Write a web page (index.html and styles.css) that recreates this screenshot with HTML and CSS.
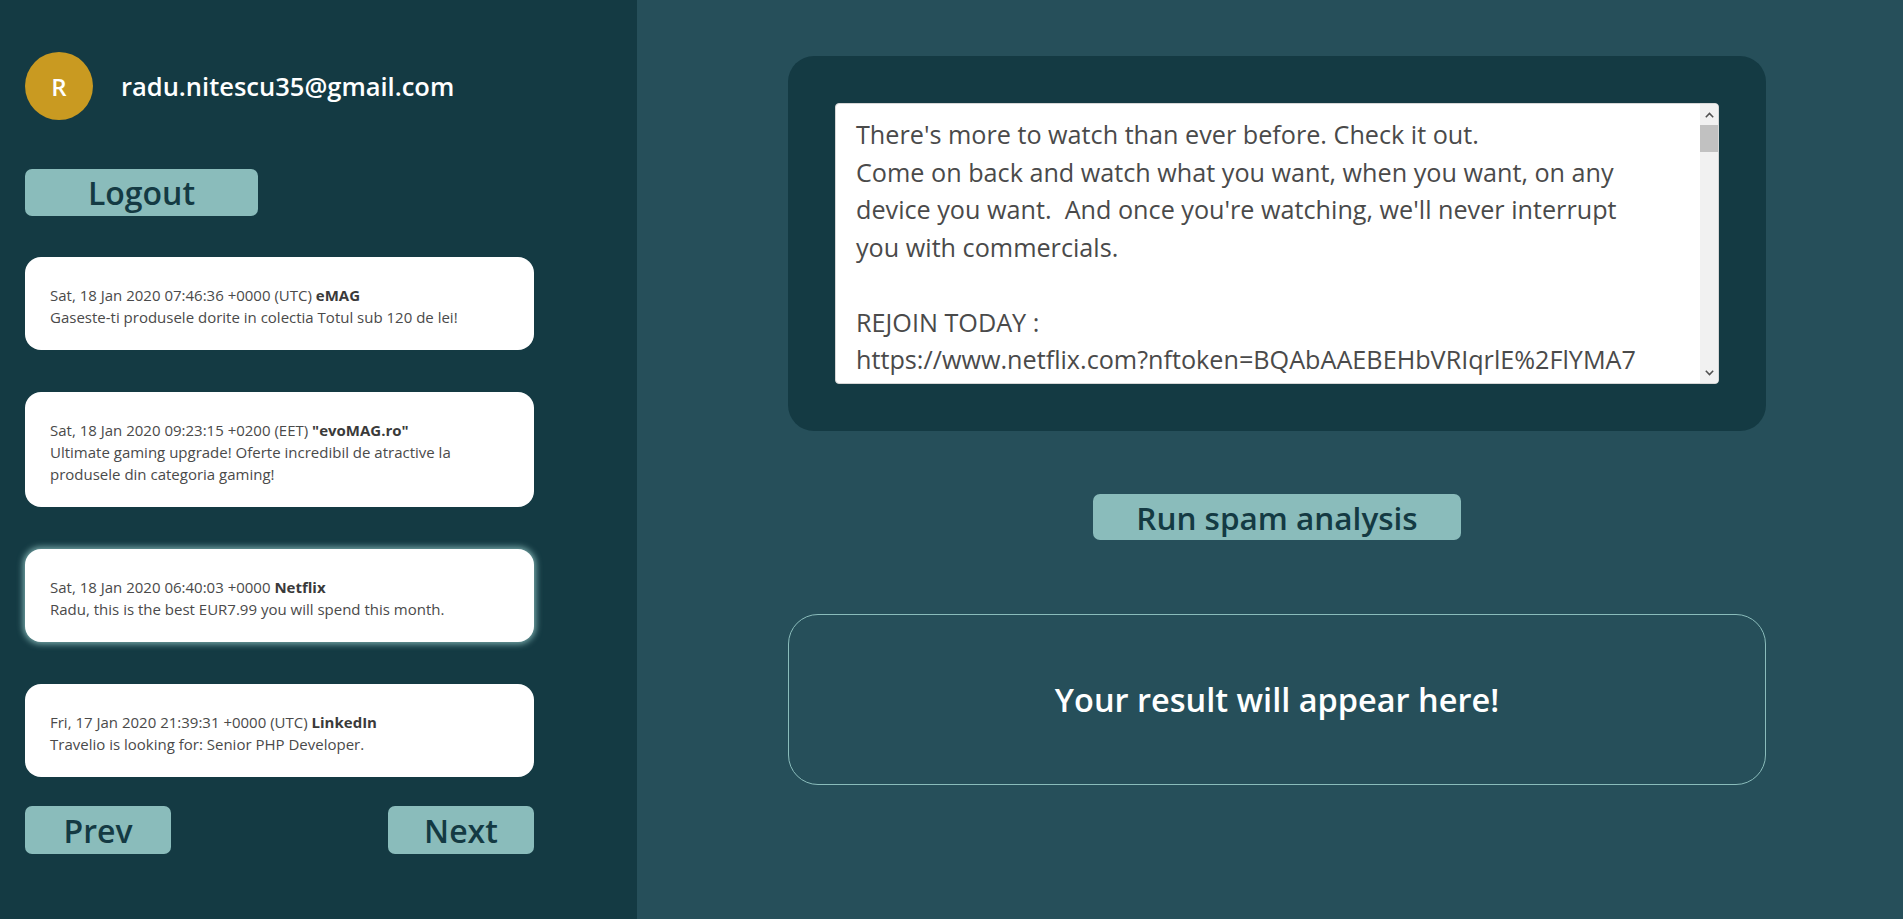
FILE: index.html
```html
<!DOCTYPE html>
<html lang="en">
<head>
<meta charset="utf-8">
<title>Spam Analyzer</title>
<link rel="stylesheet" href="styles.css">
</head>
<body>
<div class="app">
  <aside class="sidebar">
    <div class="user">
      <div class="avatar">R</div>
      <div class="email">radu.nitescu35@gmail.com</div>
    </div>
    <button class="btn logout">Logout</button>
    <ul class="mails">
      <li class="mail">
        <div class="meta">Sat, 18 Jan 2020 07:46:36 +0000 (UTC) <b>eMAG</b></div>
        <div class="subject">Gaseste-ti produsele dorite in colectia Totul sub 120 de lei!</div>
      </li>
      <li class="mail">
        <div class="meta">Sat, 18 Jan 2020 09:23:15 +0200 (EET) <b>"evoMAG.ro"</b></div>
        <div class="subject">Ultimate gaming upgrade! Oferte incredibil de atractive la produsele din categoria gaming!</div>
      </li>
      <li class="mail selected">
        <div class="meta">Sat, 18 Jan 2020 06:40:03 +0000 <b>Netflix</b></div>
        <div class="subject">Radu, this is the best EUR7.99 you will spend this month.</div>
      </li>
      <li class="mail">
        <div class="meta">Fri, 17 Jan 2020 21:39:31 +0000 (UTC) <b>LinkedIn</b></div>
        <div class="subject">Travelio is looking for: Senior PHP Developer.</div>
      </li>
    </ul>
    <div class="pager">
      <button class="btn page">Prev</button>
      <button class="btn page">Next</button>
    </div>
  </aside>
  <main class="main">
    <div class="content">
      <div class="panel">
        <div class="editor">
          <textarea class="body" spellcheck="false">There's more to watch than ever before. Check it out.
Come on back and watch what you want, when you want, on any
device you want.  And once you're watching, we'll never interrupt
you with commercials.

REJOIN TODAY :
https://www.netflix.com?nftoken=BQAbAAEBEHbVRIqrlE%2FlYMA7
kPq4Wbz9kGzXw1jQ%2BnYcV3LrM0aEfHk8sDuT6xOiPl2ZgNb7RyCq5WmJ
tA3Hx8vLw0eNfQzUa%2FrK6pYd1sGcT9jBmViO4lXh2nWqE7oRfMuZy5C
bS8aDgKi3TpJw%2BxLq0vNcYe6HfRmU1zOs9lGtPjA4WnVd7BrEkXq2Mh
yZ5CiF0oQuTg%3D%3D%7C&amp;g=DE&amp;lnktrk=EMP&amp;src=email&amp;trkid=1001

Enjoy the latest TV shows and movies, award-winning Netflix
originals, documentaries, stand-up comedy and more.

Plans start at EUR7.99 a month. No commitments. Cancel online
anytime.

WATCH ON ANY DEVICE
Smart TVs, PlayStation, Xbox, Chromecast, Apple TV, Blu-ray
players, smartphones, tablets and more.

DOWNLOAD AND GO
Save your favourites easily and always have something to watch,
even when you are offline.

NO ADS, EVER
Enjoy uninterrupted viewing with no commercials.

Ready to watch? Restart your membership here:
https://www.netflix.com/login?nftoken=BQAbAAEBEHbVRIqrlE%2FlYMA7

We're here to help if you need it. Visit the Help Centre for
more info or contact us.

-Your friends at Netflix

Questions? Call 0800 724 9451

This message was mailed to [radu.nitescu35@gmail.com] by
Netflix as part of your Netflix membership.

Netflix International B.V.
</textarea>
          <div class="vscroll" aria-hidden="true">
            <span class="arrow">
              <svg width="9" height="6" viewBox="0 0 9 6"><path d="M0.8 5.2L4.5 1.4L8.2 5.2" fill="none" stroke="#505050" stroke-width="1.5"/></svg>
            </span>
            <span class="track"><span class="thumb"></span></span>
            <span class="arrow">
              <svg width="9" height="6" viewBox="0 0 9 6"><path d="M0.8 0.8L4.5 4.6L8.2 0.8" fill="none" stroke="#505050" stroke-width="1.5"/></svg>
            </span>
          </div>
        </div>
      </div>
      <button class="btn run">Run spam analysis</button>
      <div class="result">Your result will appear here!</div>
    </div>
  </main>
</div>
</body>
</html>
```

FILE: styles.css
```css
* { box-sizing: border-box; }

html, body {
  margin: 0;
  padding: 0;
  height: 100%;
}

body {
  font-family: "Open Sans", "Noto Sans", "Liberation Sans", sans-serif;
  overflow: hidden;
}

.app {
  display: flex;
  height: 919px;
}

.sidebar {
  width: 637px;
  flex: none;
  background: #143a43;
  padding: 52px 0 0 25px;
  display: flex;
  flex-direction: column;
}

.user {
  display: flex;
  align-items: center;
  gap: 28px;
}

.avatar {
  width: 68px;
  height: 68px;
  border-radius: 50%;
  background: #c99a21;
  color: #fff;
  font-size: 24px;
  font-weight: 600;
  display: flex;
  align-items: center;
  justify-content: center;
}

.email {
  color: #fff;
  font-size: 25.5px;
  font-weight: 600;
}

.btn {
  font-family: inherit;
  background: #8abcbb;
  color: #143a43;
  border: none;
  border-radius: 7px;
  font-size: 32px;
  font-weight: 600;
  padding: 0;
  cursor: pointer;
  display: flex;
  align-items: center;
  justify-content: center;
}

.logout {
  margin-top: 49px;
  width: 233px;
  height: 47px;
}

.mails {
  list-style: none;
  margin: 41px 0 0;
  padding: 0;
  width: 509px;
  display: flex;
  flex-direction: column;
  gap: 42px;
}

.mail {
  background: #fff;
  border-radius: 16px;
  padding: 27px 25px 22px;
  font-size: 15px;
  line-height: 22px;
  color: #4a4a4a;
}

.mail b {
  color: #3a3a3a;
  font-weight: 700;
}

.mail.selected {
  box-shadow: 0 0 6px 2px rgba(138, 188, 187, 0.85);
}

.pager {
  margin-top: 29px;
  width: 509px;
  display: flex;
  justify-content: space-between;
}

.page {
  width: 146px;
  height: 48px;
}

.main {
  flex: 1;
  background: #264f5a;
  padding: 56px 0 0 151px;
}

.content {
  width: 978px;
  display: flex;
  flex-direction: column;
  align-items: center;
}

.panel {
  width: 978px;
  background: #143a43;
  border-radius: 26px;
  padding: 47px;
}

.editor {
  position: relative;
  width: 884px;
  height: 281px;
}

.body {
  display: block;
  width: 100%;
  height: 100%;
  resize: none;
  border: 1px solid #d6d6d6;
  border-radius: 4px;
  padding: 12px 38px 12px 20px;
  font-family: inherit;
  font-size: 25.2px;
  line-height: 37.5px;
  color: #4a4a4a;
  background: #fff;
  outline: none;
  overflow: hidden;
}

.vscroll {
  position: absolute;
  top: 1px;
  right: 1px;
  bottom: 1px;
  width: 18px;
  background: #f1f1f1;
  display: flex;
  flex-direction: column;
  border-radius: 0 3px 3px 0;
}

.arrow {
  height: 21px;
  flex: none;
  display: flex;
  align-items: center;
  justify-content: center;
}

.track {
  flex: 1;
  display: block;
}

.thumb {
  display: block;
  height: 27px;
  background: #c1c1c1;
}

.run {
  margin-top: 63px;
  width: 368px;
  height: 46px;
  font-size: 31.5px;
}

.result {
  margin-top: 74px;
  width: 978px;
  height: 171px;
  border: 1px solid #8abcbb;
  border-radius: 30px;
  display: flex;
  align-items: center;
  justify-content: center;
  color: #fff;
  font-size: 32.5px;
  font-weight: 600;
}
```
